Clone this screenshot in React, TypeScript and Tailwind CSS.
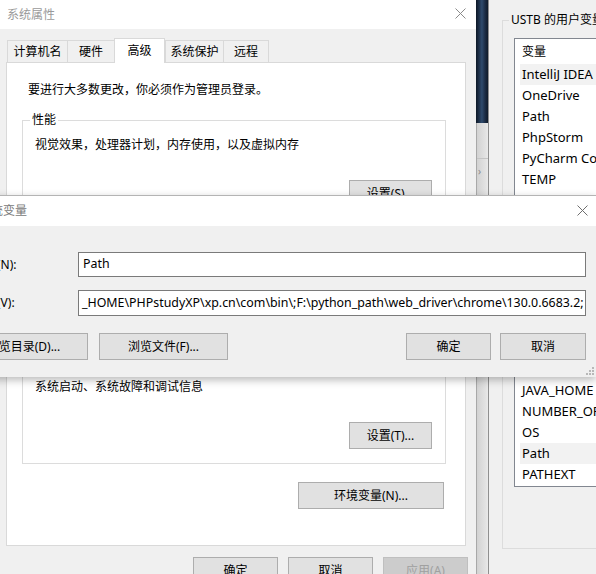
import React from "react";

const CloseX = ({ color, className = "" }: { color: string; className?: string }) => (
  <svg width="11" height="11" viewBox="0 0 11 11" className={className}>
    <path d="M0.5 0.5 L10.5 10.5 M10.5 0.5 L0.5 10.5" stroke={color} strokeWidth="1" fill="none" />
  </svg>
);

const Btn = ({
  label,
  className = "",
  disabled = false,
}: {
  label: string;
  className?: string;
  disabled?: boolean;
}) => (
  <div
    className={`flex shrink-0 items-center justify-center border text-[12px] leading-none ${
      disabled ? "border-[#bfbfbf] bg-[#cccccc] text-[#a0a0a0]" : "border-[#adadad] bg-[#e1e1e1] text-black"
    } ${className}`}
  >
    {label}
  </div>
);

const GroupBox = ({
  title,
  text,
  button,
  className = "",
}: {
  title?: string;
  text?: string;
  button?: string;
  className?: string;
}) => (
  <div className={`relative flex h-[102px] w-[424px] flex-col border border-[#dcdcdc] pb-[14px] pl-[12px] pr-[13px] pt-[16px] ${className}`}>
    {title && <span className="absolute left-[7px] top-[-9px] bg-white px-[2px] leading-[16px]">{title}</span>}
    {text && <div className="leading-[16px]">{text}</div>}
    <div className="flex-1" />
    {button && <Btn label={button} className="h-[27px] w-[83px] self-end" />}
  </div>
);

const Tab = ({ label, w, active = false, last = false }: { label: string; w: string; active?: boolean; last?: boolean }) =>
  active ? (
    <div className={`relative z-10 -mb-px flex h-[25px] ${w} items-start justify-center border border-b-0 border-[#d9d9d9] bg-white pt-[4px] leading-[16px]`}>
      {label}
    </div>
  ) : (
    <div
      className={`flex h-[22px] ${w} items-center justify-center border-t border-l ${last ? "border-r" : ""} border-[#d9d9d9] bg-[#f0f0f0] leading-[16px]`}
    >
      {label}
    </div>
  );

const ListRow = ({ label, hl = false }: { label: string; hl?: boolean }) => (
  <div className={`ml-[5px] flex h-[21px] items-center whitespace-nowrap pl-[2px] text-[13px] ${hl ? "bg-[#f2f2f2]" : ""}`}>{label}</div>
);

const Grip = () => (
  <svg width="8" height="8" viewBox="0 0 8 8" className="absolute bottom-[2px] right-[2px]">
    {[
      [6, 0],
      [6, 3],
      [3, 3],
      [6, 6],
      [3, 6],
      [0, 6],
    ].map(([x, y], i) => (
      <rect key={i} x={x} y={y} width="2" height="2" fill="#b8b8b8" />
    ))}
  </svg>
);

export default function App() {
  return (
    <div className="relative h-[574px] w-[596px] overflow-hidden bg-[#f0f0f0] font-['Noto_Sans','Noto_Sans_CJK_SC',sans-serif] text-[12px] text-black">
      {/* 系统属性 window */}
      <div className="absolute left-0 top-0 flex h-[600px] w-[476px] flex-col bg-[#f0f0f0]">
        <div className="relative flex h-[29px] shrink-0 items-center bg-white pl-[7px] text-[#9a9a9a]">
          系统属性
          <CloseX color="#8a8a8a" className="absolute right-[10px] top-[8px]" />
        </div>
        <div className="flex flex-col px-[6px] pt-[9px]">
          <div className="ml-[1px] flex h-[24px] items-end">
            <Tab label="计算机名" w="w-[60px]" />
            <Tab label="硬件" w="w-[47px]" />
            <Tab label="高级" w="w-[51px]" active />
            <Tab label="系统保护" w="w-[58px]" />
            <Tab label="远程" w="w-[46px]" last />
          </div>
          <div className="flex h-[484px] w-[460px] flex-col border border-[#d9d9d9] bg-white pl-[15px] pt-[19px]">
            <div className="pl-[6px] leading-[16px]">要进行大多数更改，你必须作为管理员登录。</div>
            <GroupBox title="性能" text="视觉效果，处理器计划，内存使用，以及虚拟内存" button="设置(S)..." className="mt-[22px]" />
            {/* 用户配置文件 group sits under the edit dialog */}
            <GroupBox className="mt-[19px]" />
            <GroupBox title="启动和故障恢复" text="系统启动、系统故障和调试信息" button="设置(T)..." className="mt-[19px]" />
            <div className="mt-[18px] flex w-[424px] justify-end pr-[2px]">
              <Btn label="环境变量(N)..." className="h-[27px] w-[146px]" />
            </div>
          </div>
          <div className="mt-[11px] flex justify-end gap-[10px] pr-[2px]">
            <Btn label="确定" className="h-[27px] w-[85px]" />
            <Btn label="取消" className="h-[27px] w-[85px]" />
            <Btn label="应用(A)" className="h-[27px] w-[85px]" disabled />
          </div>
        </div>
      </div>

      {/* desktop gap / scroll strip */}
      <div className="absolute bottom-0 left-[476px] top-0 flex w-[13px] flex-col">
        <div className="h-[123px] bg-[linear-gradient(to_right,#0d1726,#2f4a6c_45%,#1c2c44_70%,#0b1420)]" />
        <div className="relative flex-1 border-l border-[#a8a8a8] bg-[linear-gradient(to_right,#d2d2d2,#e2e2e2_70%,#ececec)]">
          <div className="absolute left-0 right-0 top-[35px] h-px bg-[#c4c4c4]" />
          <span className="absolute left-[1px] top-[43px] text-[10px] leading-none text-[#8a8a8a]">›</span>
        </div>
      </div>

      {/* 环境变量 window (partly visible) */}
      <div className="absolute bottom-0 left-[488px] top-0 w-[140px] border-l border-[#8f8f8f] bg-[#f0f0f0] pl-[13px] pt-[20px]">
        <div className="relative flex h-[529px] w-[200px] flex-col border border-[#dcdcdc] pl-[11px] pt-[17px]">
          <span className="absolute left-[6px] top-[-9px] whitespace-nowrap bg-[#f0f0f0] px-[2px] leading-[16px]">
            USTB 的用户变量(U)
          </span>
          <div className="flex h-[449px] w-[180px] flex-col justify-between border border-[#828790] bg-white pb-px">
            <div className="flex flex-col">
              <div className="flex h-[25px] items-center pl-[7px]">变量</div>
              <ListRow label="IntelliJ IDEA Community Edition" hl />
              <ListRow label="OneDrive" />
              <ListRow label="Path" />
              <ListRow label="PhpStorm" />
              <ListRow label="PyCharm Community Edition" />
              <ListRow label="TEMP" />
            </div>
            <div className="flex flex-col">
              <ListRow label="JAVA_HOME" />
              <ListRow label="NUMBER_OF_PROCESSORS" />
              <ListRow label="OS" />
              <ListRow label="Path" hl />
              <ListRow label="PATHEXT" />
            </div>
          </div>
        </div>
      </div>

      {/* 编辑系统变量 dialog */}
      <div className="absolute left-[-55px] top-[195px] flex h-[182px] w-[651px] flex-col border-t border-[#b4b4b4] shadow-[0_3px_8px_rgba(0,0,0,0.28)]">
        <div className="relative flex h-[30px] shrink-0 items-center bg-white pl-[10px] text-[#7a7a7a]">
          编辑系统变量
          <CloseX color="#6e6e6e" className="absolute right-[8px] top-[9px]" />
        </div>
        <div className="relative flex flex-1 flex-col bg-[#f0f0f0] pr-[10px] pt-[26px]">
          <div className="flex items-center">
            <div className="w-[128px] shrink-0 pl-[16px]">变量名(N):</div>
            <div className="ml-[5px] flex h-[25px] w-[508px] items-center border border-[#7a7a7a] bg-white pl-[4px] text-[12.4px]">Path</div>
          </div>
          <div className="mt-[13px] flex items-center">
            <div className="w-[128px] shrink-0 pl-[16px]">变量值(V):</div>
            <div className="ml-[5px] flex h-[26px] w-[508px] items-center overflow-hidden whitespace-nowrap border border-[#7a7a7a] bg-white pl-[3px] text-[12.4px]">
              _HOME\PHPstudyXP\xp.cn\com\bin\;F:\python_path\web_driver\chrome\130.0.6683.2;
            </div>
          </div>
          <div className="mt-[17px] flex items-center pl-[14px]">
            <Btn label="浏览目录(D)..." className="h-[27px] w-[129px]" />
            <Btn label="浏览文件(F)..." className="ml-[11px] h-[27px] w-[129px]" />
            <div className="flex-1" />
            <Btn label="确定" className="h-[27px] w-[85px]" />
            <Btn label="取消" className="ml-[9px] h-[27px] w-[86px]" />
          </div>
          <Grip />
        </div>
      </div>
    </div>
  );
}
